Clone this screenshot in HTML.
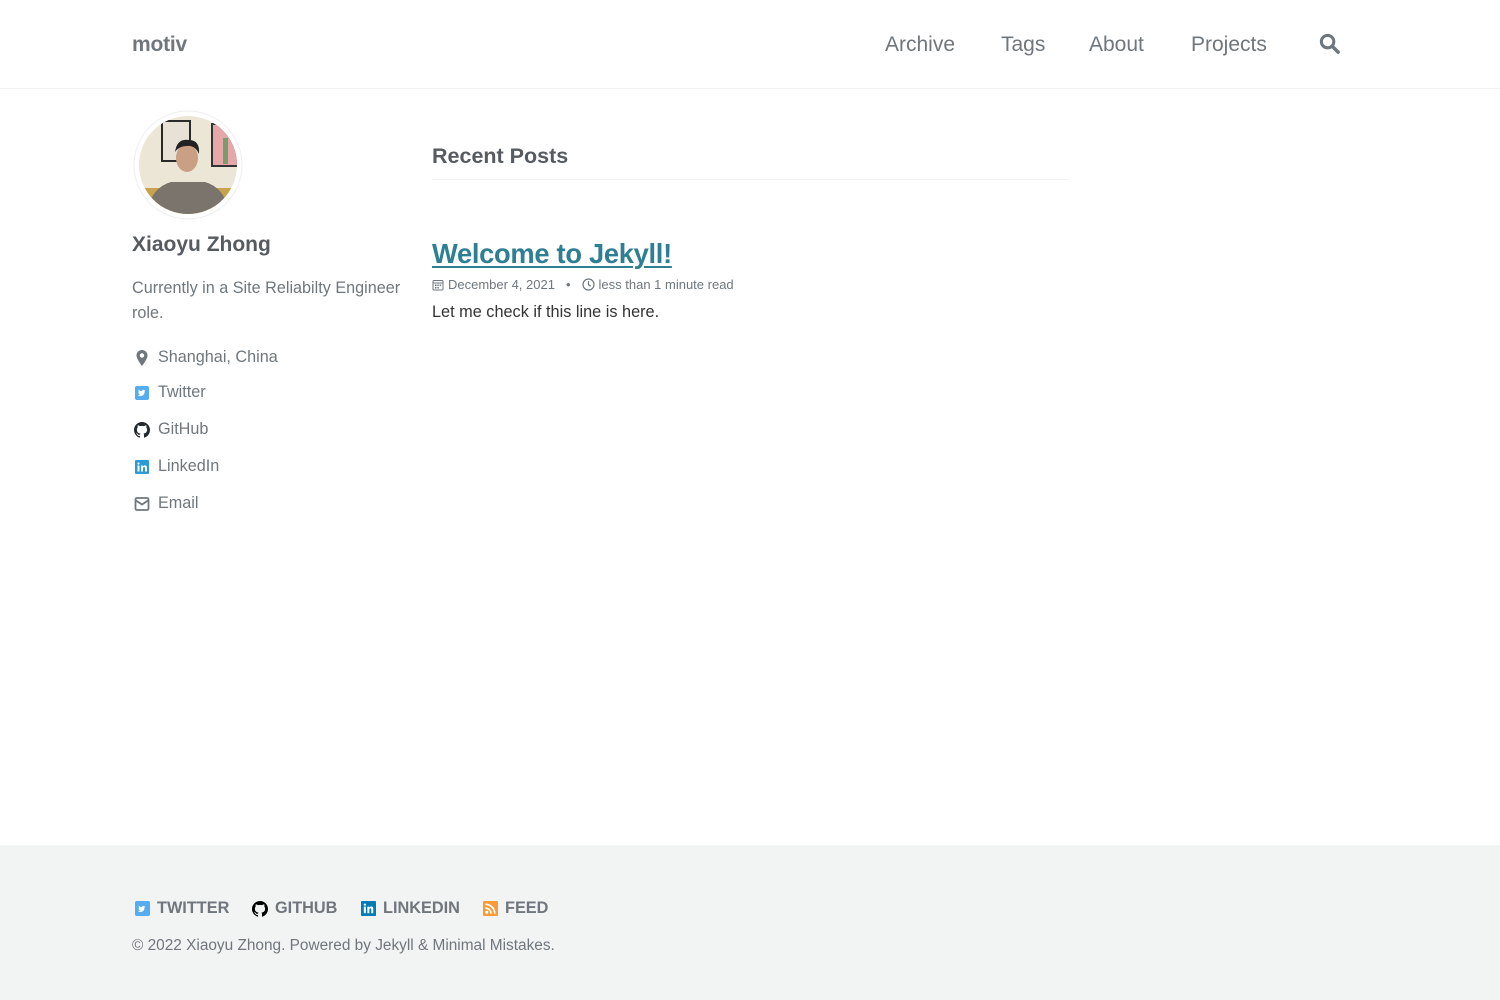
<!DOCTYPE html>
<html><head><meta charset="utf-8"><style>
*{box-sizing:border-box;margin:0;padding:0}
body{width:1500px;height:1000px;font-family:"Liberation Sans",sans-serif;color:#494e52;background:#fff;position:relative;overflow:hidden}
.hdr{position:absolute;left:0;top:0;width:1500px;height:89px;border-bottom:1px solid #f2f3f3}
.logo{position:absolute;left:132px;top:33px;font-size:21px;font-weight:bold;color:#6f777d;letter-spacing:-0.2px}
.nav{position:absolute;top:33px;font-size:21px;color:#6f777d}
.side{position:absolute;left:132px}
.name{top:233px;font-size:21px;font-weight:bold;color:#555b60}
.bio{top:276px;font-size:16.2px;line-height:25px;color:#6f777d;width:290px}
.li{font-size:16.2px;color:#6f777d;display:flex;align-items:center}
.li svg{margin-right:8px;margin-left:2px}
.rp{position:absolute;left:432px;top:144px;font-size:21.5px;font-weight:bold;color:#555b60}
.rpl{position:absolute;left:432px;top:179px;width:638px;height:1px;background:#f2f3f3}
.title{position:absolute;left:432px;top:238px;font-size:27.3px;font-weight:bold;color:#2f7f93;text-decoration:underline;text-underline-offset:3px;text-decoration-thickness:2px;letter-spacing:-0.3px}
.meta{position:absolute;left:432px;top:277px;font-size:13px;color:#6f777d;display:flex;align-items:center}
.ex{position:absolute;left:432px;top:303px;font-size:16.3px;color:#333}
.foot{position:absolute;left:0;top:845px;width:1500px;height:155px;background:#f2f3f3}
.fl{position:absolute;top:899px;font-size:16.3px;font-weight:bold;color:#6f777d;display:flex;align-items:center}
.fl svg{margin-right:7px}
.copy{position:absolute;left:132px;top:937px;font-size:15.4px;color:#6f777d}
</style></head><body>
<div class="hdr">
<div class="logo">motiv</div>
<div class="nav" style="left:885px">Archive</div>
<div class="nav" style="left:1001px">Tags</div>
<div class="nav" style="left:1089px">About</div>
<div class="nav" style="left:1191px">Projects</div>
<svg style="position:absolute;left:1318px;top:32px" width="23" height="23" viewBox="0 0 24 24"><circle cx="10" cy="10" r="6.5" fill="none" stroke="#6f777d" stroke-width="3.2"/><line x1="15" y1="15" x2="21" y2="21" stroke="#6f777d" stroke-width="3.6" stroke-linecap="round"/></svg>
</div>

<svg style="position:absolute;left:133px;top:110px" width="110" height="110" viewBox="0 0 110 110">
<defs><clipPath id="c"><circle cx="55" cy="55" r="49"/></clipPath></defs>
<circle cx="55" cy="55" r="54" fill="#fff" stroke="#eee" stroke-width="1"/>
<g clip-path="url(#c)">
<rect width="110" height="110" fill="#ece6d6"/>
<rect x="28" y="10" width="30" height="42" fill="#2a2a2a"/><rect x="30" y="12" width="26" height="38" fill="#e8e2d6"/>
<rect x="78" y="13" width="30" height="44" fill="#333"/><rect x="80" y="15" width="26" height="40" fill="#e6a7a9"/>
<rect x="90" y="28" width="5" height="26" fill="#7d9a6d"/>
<rect x="0" y="78" width="110" height="32" fill="#c9a24e"/>
<path d="M12 110 Q16 78 38 72 L72 72 Q94 78 98 110Z" fill="#7a746c"/>
<ellipse cx="54" cy="48" rx="11" ry="14" fill="#c9a083"/>
<path d="M42 42 Q44 28 56 30 Q67 30 66 44 Q62 35 54 36 Q46 36 42 42Z" fill="#222"/>
</g></svg>

<div class="side name">Xiaoyu Zhong</div>
<div class="side bio">Currently in a Site Reliabilty Engineer role.</div>
<div class="side li" style="top:348px"><svg width="16" height="18" viewBox="0 0 16 18"><path d="M8 1C4.7 1 2.5 3.5 2.5 6.5 2.5 10 8 17 8 17s5.5-7 5.5-10.5C13.5 3.5 11.3 1 8 1z" fill="#6f777d"/><circle cx="8" cy="6.5" r="2.2" fill="#fff"/></svg>Shanghai, China</div>
<div class="side li" style="top:383px"><svg width="16" height="16" viewBox="0 0 16 16"><rect x="1" y="1" width="14" height="14" rx="2" fill="#55acee"/><path d="M4 10.5c2 1.3 5.5.8 6.5-2.5l.2-2 1-.8-1.2.2c-.5-1-2.3-1-2.5.7-1.6 0-2.7-.8-3.3-1.5-.5 1 0 2 .5 2.3-.5 0-1-.3-1-.3 0 1 .7 1.5 1.2 1.6-.5.2-1 0-1 0 .3.8 1 1.1 1.6 1.2-.8.6-1.5.8-2 .7z" fill="#fff"/></svg>Twitter</div>
<div class="side li" style="top:420px"><svg width="16" height="16" viewBox="0 0 16 16"><path fill="#24292e" d="M8 0C3.58 0 0 3.58 0 8c0 3.54 2.29 6.53 5.47 7.59.4.07.55-.17.55-.38v-1.33c-2.23.48-2.7-1.07-2.7-1.07-.36-.92-.89-1.17-.89-1.17-.73-.5.05-.49.05-.49.8.06 1.23.83 1.23.83.71 1.22 1.87.87 2.33.66.07-.52.28-.87.5-1.07-1.78-.2-3.64-.89-3.64-3.95 0-.87.31-1.59.82-2.15-.08-.2-.36-1.02.08-2.12 0 0 .67-.21 2.2.82a7.6 7.6 0 014 0c1.53-1.04 2.2-.82 2.2-.82.44 1.1.16 1.92.08 2.12.51.56.82 1.27.82 2.15 0 3.07-1.87 3.75-3.65 3.95.29.25.54.73.54 1.48v2.2c0 .21.15.46.55.38A8 8 0 0016 8c0-4.42-3.58-8-8-8z"/></svg>GitHub</div>
<div class="side li" style="top:457px"><svg width="16" height="16" viewBox="0 0 16 16"><rect x="1" y="1" width="14" height="14" rx="1" fill="#2d9ad6"/><rect x="3.5" y="6.5" width="2" height="6" fill="#fff"/><circle cx="4.5" cy="4.5" r="1.1" fill="#fff"/><path d="M7 6.5h2v1c.5-.8 1.3-1.2 2.2-1.1 1.3.1 1.8 1 1.8 2.4v3.7h-2V9.2c0-.8-.3-1.2-.9-1.2-.7 0-1.1.5-1.1 1.3v3.2H7z" fill="#fff"/></svg>LinkedIn</div>
<div class="side li" style="top:494px"><svg width="16" height="16" viewBox="0 0 16 16"><rect x="1.5" y="2" width="13" height="12" rx="1.5" fill="none" stroke="#6f777d" stroke-width="1.8"/><path d="M2 4.5l6 4 6-4" fill="none" stroke="#6f777d" stroke-width="1.8"/></svg>Email</div>

<div class="rp">Recent Posts</div>
<div class="rpl"></div>
<div class="title">Welcome to Jekyll!</div>
<div class="meta"><svg width="12" height="12" viewBox="0 0 12 12" style="margin-right:4px"><rect x="1" y="1.5" width="10" height="9.5" rx="1" fill="none" stroke="#6f777d" stroke-width="1"/><line x1="1" y1="4" x2="11" y2="4" stroke="#6f777d"/><rect x="3" y="5.5" width="1.5" height="1.5" fill="#6f777d"/><rect x="5.3" y="5.5" width="1.5" height="1.5" fill="#6f777d"/><rect x="7.6" y="5.5" width="1.5" height="1.5" fill="#6f777d"/><rect x="3" y="8" width="1.5" height="1.5" fill="#6f777d"/><rect x="5.3" y="8" width="1.5" height="1.5" fill="#6f777d"/></svg>December 4, 2021<span style="margin:0 11px">•</span><svg width="13" height="13" viewBox="0 0 13 13" style="margin-right:4px"><circle cx="6.5" cy="6.5" r="5.5" fill="none" stroke="#6f777d" stroke-width="1.2"/><path d="M6.5 3v3.8l2.3 1.4" fill="none" stroke="#6f777d" stroke-width="1.2"/></svg>less than 1 minute read</div>
<div class="ex">Let me check if this line is here.</div>

<div class="foot"></div>
<div class="fl" style="left:135px"><svg width="15" height="15" viewBox="0 0 16 16"><rect x="0" y="0" width="16" height="16" rx="2" fill="#55acee"/><path d="M3.5 11c2 1.3 5.5.8 6.5-2.5l.2-2 1-.8-1.2.2c-.5-1-2.3-1-2.5.7-1.6 0-2.7-.8-3.3-1.5-.5 1 0 2 .5 2.3-.5 0-1-.3-1-.3 0 1 .7 1.5 1.2 1.6-.5.2-1 0-1 0 .3.8 1 1.1 1.6 1.2-.8.6-1.5.8-2 .7z" fill="#fff"/></svg>TWITTER</div>
<div class="fl" style="left:252px"><svg width="16" height="16" viewBox="0 0 16 16"><path fill="#000" d="M8 0C3.58 0 0 3.58 0 8c0 3.54 2.29 6.53 5.47 7.59.4.07.55-.17.55-.38v-1.33c-2.23.48-2.7-1.07-2.7-1.07-.36-.92-.89-1.17-.89-1.17-.73-.5.05-.49.05-.49.8.06 1.23.83 1.23.83.71 1.22 1.87.87 2.33.66.07-.52.28-.87.5-1.07-1.78-.2-3.64-.89-3.64-3.95 0-.87.31-1.59.82-2.150-.08-.2-.36-1.02.08-2.12 0 0 .67-.21 2.2.82a7.6 7.6 0 014 0c1.53-1.04 2.2-.82 2.2-.82.44 1.1.16 1.92.08 2.12.51.56.82 1.27.82 2.15 0 3.07-1.87 3.75-3.65 3.95.29.25.54.73.54 1.48v2.2c0 .21.15.46.55.38A8 8 0 0016 8c0-4.42-3.58-8-8-8z"/></svg>GITHUB</div>
<div class="fl" style="left:361px"><svg width="15" height="15" viewBox="0 0 16 16"><rect x="0" y="0" width="16" height="16" rx="1" fill="#007bb6"/><rect x="3" y="6" width="2.2" height="7" fill="#fff"/><circle cx="4.1" cy="3.8" r="1.2" fill="#fff"/><path d="M6.8 6h2.1v1c.5-.8 1.3-1.2 2.3-1.1 1.4.1 1.9 1 1.9 2.5V13h-2.2V9.1c0-.8-.3-1.2-.9-1.2-.7 0-1.1.5-1.1 1.3V13H6.8z" fill="#fff"/></svg>LINKEDIN</div>
<div class="fl" style="left:483px"><svg width="15" height="15" viewBox="0 0 16 16"><rect width="16" height="16" rx="1" fill="#fa9b39"/><circle cx="4" cy="12" r="1.6" fill="#fff"/><path d="M2.5 7.5a6 6 0 016 6M2.5 3.5a10 10 0 0110 10" fill="none" stroke="#fff" stroke-width="1.8"/></svg>FEED</div>
<div class="copy">© 2022 Xiaoyu Zhong. Powered by Jekyll &amp; Minimal Mistakes.</div>
</body></html>
